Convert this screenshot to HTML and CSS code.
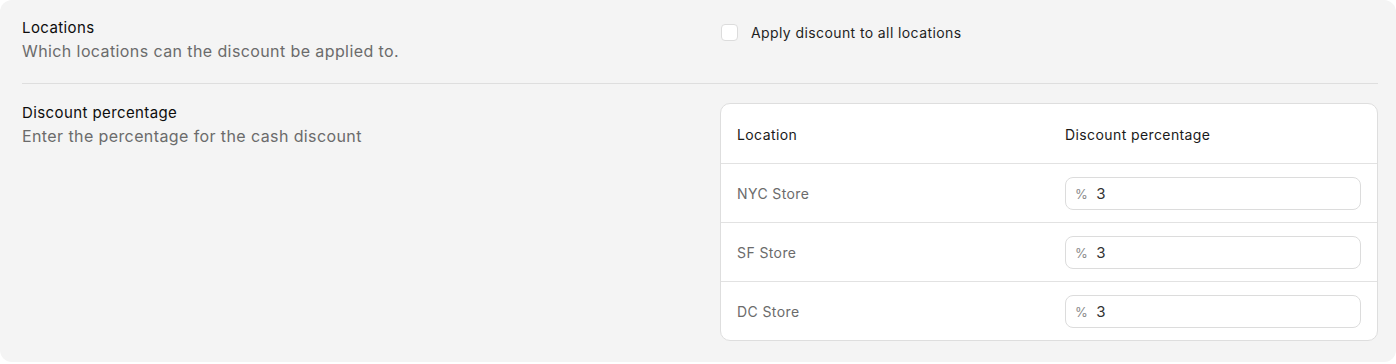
FILE: index.html
```html
<!DOCTYPE html>
<html>
<head>
    <link rel="stylesheet" href="styles.css">
</head>
<body>
    <div class="panel">
        <div class="section">
            <div class="intro">
                <h3>Locations</h3>
                <p>Which locations can the discount be applied to.</p>
            </div>
            <label class="check">
                <span class="box"></span>
                Apply discount to all locations
            </label>
        </div>

        <div class="section">
            <div class="intro">
                <h3>Discount percentage</h3>
                <p>Enter the percentage for the cash discount</p>
            </div>
            <div class="card">
                <table>
                    <tr>
                        <th>Location</th>
                        <th>Discount percentage</th>
                    </tr>
                    <tr>
                        <td>NYC Store</td>
                        <td><div class="field"><span>%</span>3</div></td>
                    </tr>
                    <tr>
                        <td>SF Store</td>
                        <td><div class="field"><span>%</span>3</div></td>
                    </tr>
                    <tr>
                        <td>DC Store</td>
                        <td><div class="field"><span>%</span>3</div></td>
                    </tr>
                </table>
            </div>
        </div>
    </div>
</body>
</html>
```

FILE: styles.css
```css
body {
    margin: 0;
    background-color: #ffffff;
    font-family: Inter, "Noto Sans", sans-serif;
    color: #111111;
    letter-spacing: 0.4px;
}

.panel {
    background-color: #f4f4f4;
    border-radius: 12px;
    padding: 0 18px 0 22px;
    height: 362px;
    box-sizing: border-box;
}

.section {
    display: grid;
    grid-template-columns: 1fr 1fr;
    gap: 40px;
    padding: 18px 0 20px;
}

.section + .section {
    border-top: 1px solid #dedede;
    padding-top: 19px;
}

.intro h3 {
    margin: 0;
    font-size: 15px;
    font-weight: 400;
    line-height: 20px;
    color: #0d0d0d;
}

.intro p {
    margin: 1px 0 0;
    font-size: 16px;
    line-height: 24px;
    color: #6b6b6b;
}

.check {
    display: flex;
    align-items: center;
    gap: 13px;
    font-size: 14px;
    height: 16px;
    margin-top: 6px;
    color: #1f1f1f;
}

.box {
    width: 15px;
    height: 15px;
    background-color: #ffffff;
    border: 1px solid #dcdcdc;
    border-radius: 4px;
    margin-left: 1px;
}

.card {
    background-color: #ffffff;
    border: 1px solid #dedede;
    border-radius: 10px;
    overflow: hidden;
}

table {
    width: 100%;
    border-collapse: collapse;
    table-layout: fixed;
    font-size: 14px;
}

th {
    text-align: left;
    font-weight: 400;
    color: #1a1a1a;
    height: 58px;
    padding: 1px 16px 0;
}

td {
    color: #6b6b6b;
    padding: 13px 16px 12px;
    border-top: 1px solid #e2e2e2;
}

.field {
    height: 31px;
    border: 1px solid #dcdcdc;
    border-radius: 8px;
    display: flex;
    align-items: center;
    padding: 0 9px;
    font-size: 15px;
    color: #333333;
}

.field span {
    color: #8a8a8a;
    font-size: 13px;
    margin-right: 8px;
}
```
